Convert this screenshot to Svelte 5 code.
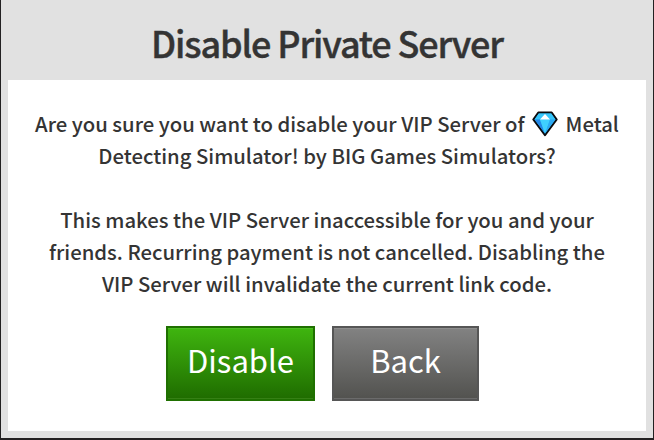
<script>
	let { onDisable = () => {}, onBack = () => {} } = $props();
</script>

<div class="modal">
	<h1 class="title">Disable Private Server</h1>
	<div class="body">
		<p class="message">
			<span class="line">
				Are you sure you want to disable your VIP Server of
				<svg class="gem" viewBox="0 0 26 26" width="26" height="26" aria-hidden="true">
					<path d="M6.3 1.5h13.4l5 7L13 24.2 1.3 8.500z" fill="#29b6f6" stroke="#0b0b0d" stroke-width="2" stroke-linejoin="round" />
					<path d="M6.800 2.500h12.400l4.200 6H2.600z" fill="#35c5fa" />
					<path d="M2.600 8.500h5.400L13 22.700z" fill="#2488e8" />
					<path d="M8 8.500h10L13 22.700z" fill="#3fd0ff" />
					<path d="M18 8.500h5.400L13 22.700z" fill="#2da9f2" />
					<path d="M13 3l5 5.500H8z" fill="#fff" />
				</svg>
				Metal
			</span>
			<span class="line">Detecting Simulator! by BIG Games Simulators?</span>
		</p>
		<p class="message">
			<span class="line">This makes the VIP Server inaccessible for you and your</span>
			<span class="line">friends. Recurring payment is not cancelled. Disabling the</span>
			<span class="line">VIP Server will invalidate the current link code.</span>
		</p>
		<div class="buttons">
			<button class="btn primary" onclick={onDisable}>Disable</button>
			<button class="btn neutral" onclick={onBack}>Back</button>
		</div>
	</div>
</div>

<style>
	.modal {
		box-sizing: border-box;
		width: 654px;
		height: 440px;
		padding: 0 7px 7px;
		border: solid #232122;
		border-width: 0 1px 2px;
		background: #e1e1e1;
		color: #343434;
		font-family: 'Noto Sans CJK SC', 'Noto Sans', sans-serif;
		display: flex;
		flex-direction: column;
	}

	.title {
		margin: 0;
		height: 80px;
		line-height: 84px;
		font-size: 36px;
		font-weight: 500;
		letter-spacing: -1.15px;
		-webkit-text-stroke: 0.4px #343434;
		text-align: center;
	}

	.body {
		flex: 1;
		padding-top: 27px;
		background: #fff;
	}

	.message {
		margin: 0 0 32px;
		font-size: 20.3px;
		font-weight: 500;
		line-height: 32px;
		text-align: center;
	}

	.line {
		display: block;
		height: 32px;
		white-space: nowrap;
	}

	.gem {
		margin: 0 3px;
		vertical-align: -5px;
	}

	.buttons {
		display: flex;
		justify-content: center;
		gap: 17px;
		margin-top: -5px;
		padding-right: 9px;
	}

	.btn {
		box-sizing: border-box;
		height: 75px;
		padding: 0 0 7px;
		border: 2px solid;
		color: #fff;
		font-family: inherit;
		font-size: 31px;
		font-weight: 400;
		line-height: 64px;
		cursor: pointer;
	}

	.primary {
		width: 149px;
		border-color: #1f7000;
		background: linear-gradient(#3fb50f, #1f6c00);
		box-shadow: inset 0 1px #4bbd20, inset 0 -1px #358014;
	}

	.neutral {
		width: 147px;
		border-color: #565656;
		background: linear-gradient(#828282, #52524f);
		box-shadow: inset 0 1px #8e8e8e, inset 0 -1px #6b6b6b;
	}
</style>
